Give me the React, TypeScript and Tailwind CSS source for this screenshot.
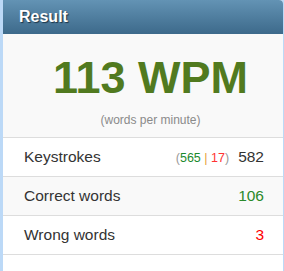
export default function App() {
  const rows = [
    { label: "Keystrokes", value: "582", color: "text-[#333333]", bg: "bg-white", extra: true },
    { label: "Correct words", value: "106", color: "text-[#2a8a2a]", bg: "bg-[#f9f9f9]", extra: false },
    { label: "Wrong words", value: "3", color: "text-[#ff0000]", bg: "bg-white", extra: false },
  ];

  return (
    <div
      className="w-[284px] h-[271px] bg-[#bcd9f7] overflow-hidden pl-[3px]"
      style={{ fontFamily: '"Liberation Sans", Arial, sans-serif' }}
    >
      <div className="w-[280px] h-full bg-white rounded-tr-[4px] overflow-hidden">
        {/* Header */}
        <div className="h-[34px] bg-gradient-to-b from-[#6393b4] to-[#3d6a8b] flex items-center pl-[16px]">
          <span className="text-white font-bold text-[16px] [text-shadow:1px_1px_1px_#1b3447]">
            Result
          </span>
        </div>

        {/* Speed */}
        <div className="bg-[#f9f9f9] h-[104px] flex flex-col items-center pl-[15px] border-b border-[#dddddd]">
          <div className="mt-[20px] text-[45px] leading-[48px] font-bold text-[#517a1f]">
            113 WPM
          </div>
          <div className="mt-[11px] text-[12px] leading-[14px] text-[#8a8a8a]">
            (words per minute)
          </div>
        </div>

        {/* Rows */}
        {rows.map((r) => (
          <div
            key={r.label}
            className={`${r.bg} h-[39px] flex items-center justify-between pl-[21px] pr-[19px] border-b border-[#dddddd]`}
          >
            <span className="text-[15.5px] text-[#333333]">{r.label}</span>
            <span className="flex items-baseline">
              {r.extra && (
                <span className="text-[12.5px] mr-[9px] text-[#999999]">
                  (<span className="text-[#1b8a2e]">565</span>{" "}
                  <span className="text-[#e8a33a]">|</span>{" "}
                  <span className="text-[#ff3333]">17</span>)
                </span>
              )}
              <span className={`text-[15.5px] ${r.color}`}>{r.value}</span>
            </span>
          </div>
        ))}
      </div>
    </div>
  );
}
